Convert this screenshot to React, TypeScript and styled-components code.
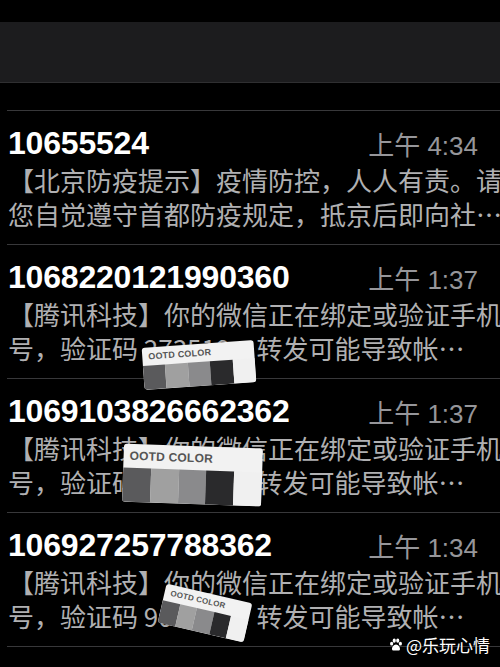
import React, {FC} from 'react';
import styled, {createGlobalStyle} from "styled-components";

const GlobalStyle = createGlobalStyle`
  html, body {
    margin: 0;
    padding: 0;
    background: #000;
  }
  body {
    width: 500px;
    height: 667px;
    overflow: hidden;
    font-family: "Liberation Sans", "Noto Sans CJK SC", sans-serif;
  }
`;

const Screen = styled.div`
  position: relative;
  width: 500px;
  height: 667px;
  overflow: hidden;
  background: #000;
`;

const NavBar = styled.div`
  margin-top: 22px;
  height: 60px;
  background: #1c1c1e;
  border-bottom: 1px solid #2f2f31;
`;

const List = styled.div`
  margin-top: 27px;
  margin-left: 7px;
  border-top: 1px solid #38383a;
`;

const Row = styled.div`
  position: relative;
  padding: 12px 0 13px 1px;
  border-bottom: 1px solid #38383a;
`;

const RowHead = styled.div`
  display: flex;
  align-items: center;
  justify-content: space-between;
  height: 40px;
  padding-right: 22px;
`;

const Sender = styled.div`
  font-family: "Liberation Sans", sans-serif;
  font-size: 32px;
  font-weight: 700;
  color: #fff;
  letter-spacing: -0.2px;
`;

const Time = styled.div`
  font-family: "Liberation Sans", "Noto Sans CJK SC", sans-serif;
  font-size: 26px;
  color: #96969a;
`;

const BodyLine = styled.div`
  font-family: "Noto Sans CJK SC", sans-serif;
  font-size: 26px;
  line-height: 34px;
  height: 34px;
  color: #b0b0b2;
  white-space: nowrap;
  overflow: hidden;
`;

const Sticker = styled.div<{$top: number; $left: number; $w: number; $h: number; $rot: number}>`
  position: absolute;
  top: ${p => p.$top}px;
  left: ${p => p.$left}px;
  width: ${p => p.$w}px;
  height: ${p => p.$h}px;
  transform: rotate(${p => p.$rot}deg);
  background: #f2f2f2;
  border-radius: 3px;
  display: flex;
  flex-direction: column;
  overflow: hidden;
  box-shadow: 0 0 2px rgba(0, 0, 0, 0.4);
`;

const StickerLabel = styled.div<{$size: number}>`
  flex: 0 0 42%;
  display: flex;
  align-items: center;
  padding-left: 6px;
  font-family: "Liberation Sans", sans-serif;
  font-size: ${p => p.$size}px;
  font-weight: 700;
  color: #555;
  letter-spacing: 0.2px;
`;

const Swatches = styled.div`
  flex: 1;
  display: flex;
`;

const Swatch = styled.div<{$c: string}>`
  flex: 1;
  background: ${p => p.$c};
`;

const Watermark = styled.div`
  position: absolute;
  right: 10px;
  bottom: 10px;
  display: flex;
  align-items: center;
  gap: 3px;
  font-family: "Noto Sans CJK SC", sans-serif;
  font-size: 17px;
  color: #fff;
  text-shadow: 0 0 2px rgba(0, 0, 0, 0.6);
`;

const swatchColors = ['#5a5a5c', '#a0a0a0', '#8a8a8c', '#2a2a2c', '#f0f0f0'];

interface IStickerProps {
    top: number;
    left: number;
    w: number;
    h: number;
    rot: number;
    label: number;
}

const ColorSticker: FC<IStickerProps> = ({top, left, w, h, rot, label}) => (
    <Sticker $top={top} $left={left} $w={w} $h={h} $rot={rot}>
        <StickerLabel $size={label}>OOTD COLOR</StickerLabel>
        <Swatches>
            {swatchColors.map(c => <Swatch key={c} $c={c}/>)}
        </Swatches>
    </Sticker>
);

const Paw = () => (
    <svg width="14" height="14" viewBox="0 0 16 16" fill="#fff">
        <ellipse cx="3" cy="6.5" rx="1.8" ry="2.2"/>
        <ellipse cx="6" cy="3" rx="1.8" ry="2.3"/>
        <ellipse cx="10" cy="3" rx="1.8" ry="2.3"/>
        <ellipse cx="13" cy="6.5" rx="1.8" ry="2.2"/>
        <path d="M8 7.5c-2.5 0-5 3.5-4.5 5.5.4 1.6 2.5 1.4 4.5 1.4s4.1.2 4.5-1.4C13 11 10.5 7.5 8 7.5z"/>
    </svg>
);

const messages = [
    {
        sender: '10655524',
        time: '上午 4:34',
        lines: ['【北京防疫提示】疫情防控，人人有责。请', '您自觉遵守首都防疫规定，抵京后即向社…'],
    },
    {
        sender: '1068220121990360',
        time: '上午 1:37',
        lines: ['【腾讯科技】你的微信正在绑定或验证手机', '号，验证码 273519，转发可能导致帐…'],
    },
    {
        sender: '1069103826662362',
        time: '上午 1:37',
        lines: ['【腾讯科技】你的微信正在绑定或验证手机', '号，验证码 385027，转发可能导致帐…'],
    },
    {
        sender: '106927257788362',
        time: '上午 1:34',
        lines: ['【腾讯科技】你的微信正在绑定或验证手机', '号，验证码 906214，转发可能导致帐…'],
    },
    {
        sender: '1069040107773072',
        time: '上午 1:30',
        lines: ['【腾讯科技】你的微信正在绑定或验证手机', '号，验证码 551806，转发可能导致帐…'],
    },
];

const stickers: Record<number, IStickerProps> = {
    1: {top: 99, left: 136, w: 112, h: 42, rot: -4, label: 9},
    2: {top: 67, left: 116, w: 139, h: 58, rot: 2, label: 12},
    3: {top: 80, left: 154, w: 88, h: 40, rot: 13, label: 8},
};

const App: FC = () => {
    return (
        <>
            <GlobalStyle/>
            <Screen>
                <NavBar/>
                <List>
                    {messages.map((m, i) => (
                        <Row key={m.sender}>
                            <RowHead>
                                <Sender>{m.sender}</Sender>
                                <Time>{m.time}</Time>
                            </RowHead>
                            {m.lines.map(l => <BodyLine key={l}>{l}</BodyLine>)}
                            {stickers[i] && <ColorSticker {...stickers[i]}/>}
                        </Row>
                    ))}
                </List>
                <Watermark>
                    <Paw/>
                    <span>@乐玩心情</span>
                </Watermark>
            </Screen>
        </>
    );
};

export default App;
